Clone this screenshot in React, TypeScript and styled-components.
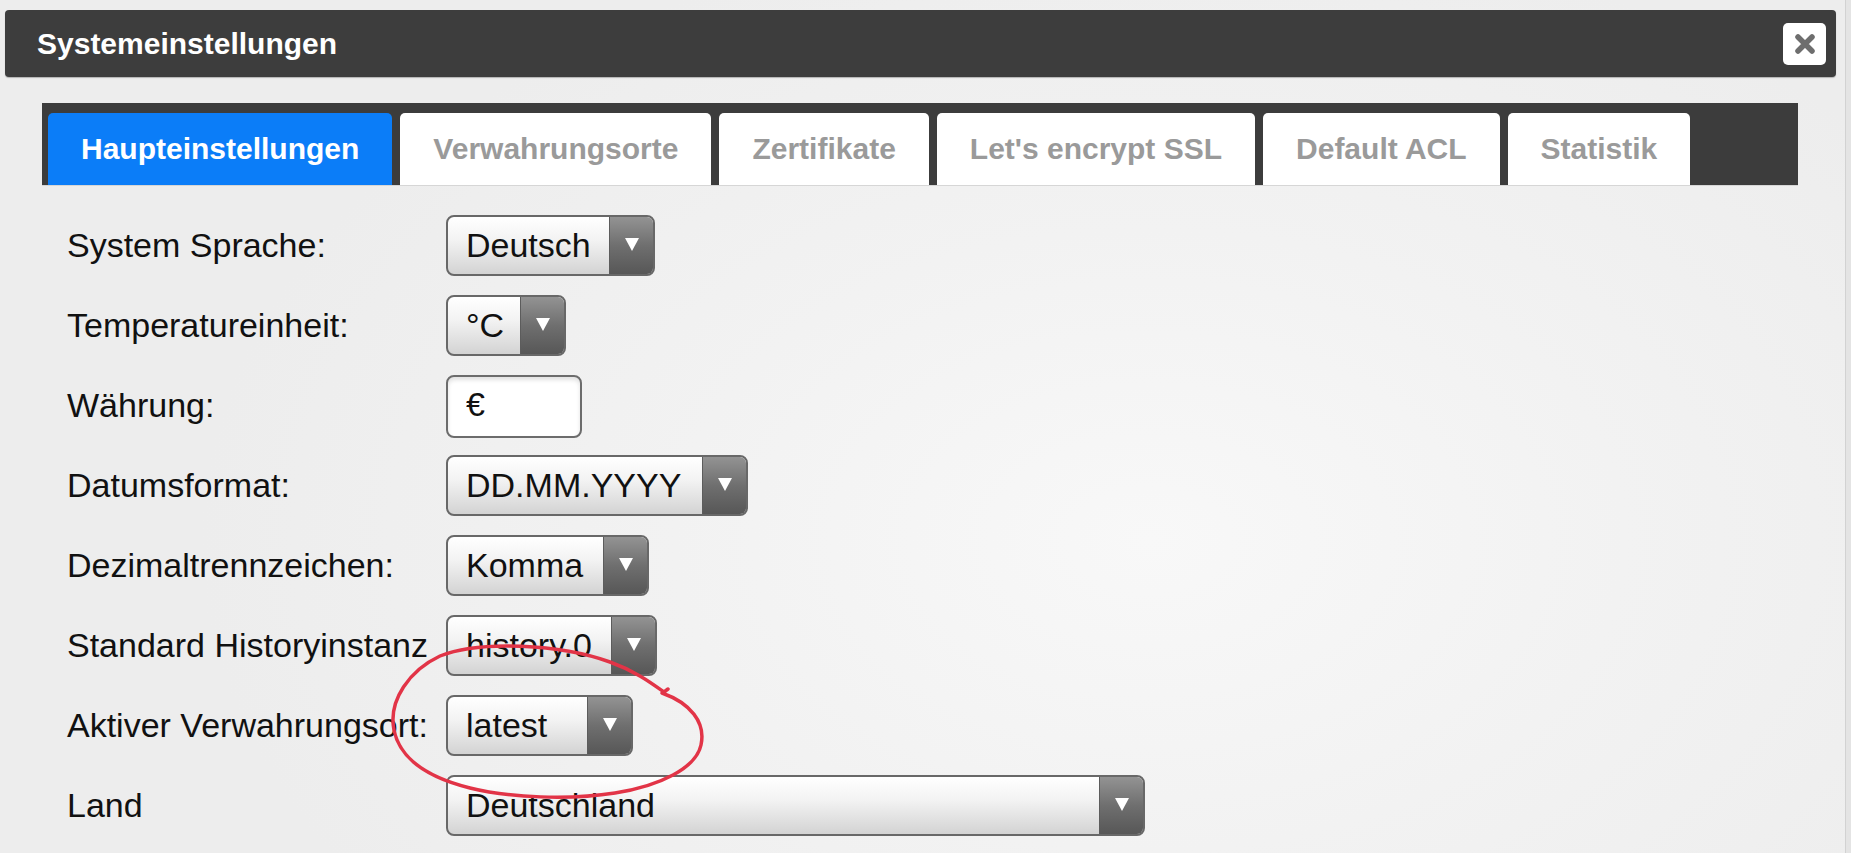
import React from "react";
import styled, { createGlobalStyle } from "styled-components";

const GlobalStyle = createGlobalStyle`
  html, body { margin: 0; padding: 0; }
  body {
    background: #e4e4e4;
    font-family: "Liberation Sans", Arial, Helvetica, sans-serif;
    overflow: hidden;
  }
`;

const Dialog = styled.div`
  position: relative;
  width: 1846px;
  height: 853px;
  box-sizing: border-box;
  padding-top: 10px;
  background: radial-gradient(ellipse 950px 620px at 1150px 540px, #f8f8f8 0%, #f2f2f2 50%, #ededed 100%);
  border-right: 1px solid #d2d2d2;
`;

const TitleBar = styled.div`
  height: 67px;
  margin: 0 9px 0 5px;
  box-sizing: border-box;
  padding: 0 10px 0 32px;
  background: #3d3d3d;
  border-radius: 4px;
  display: flex;
  align-items: center;
  justify-content: space-between;
  box-shadow: 0 1px 1px rgba(0, 0, 0, 0.25);
`;

const Title = styled.h1`
  margin: 0;
  color: #ffffff;
  font-size: 30px;
  font-weight: bold;
  letter-spacing: 0;
`;

const CloseButton = styled.button`
  width: 43px;
  height: 42px;
  padding: 0;
  border: none;
  border-radius: 5px;
  background: #ffffff;
  display: grid;
  place-items: center;
`;

const Content = styled.div`
  padding: 26px 47px 0 42px;
`;

const TabBar = styled.div`
  height: 82px;
  box-sizing: border-box;
  padding: 10px 6px 0;
  background: #3c3c3c;
  display: flex;
  align-items: flex-end;
  gap: 8px;
  box-shadow: 0 1px 0 #d6d6d6;
`;

const Tab = styled.div<{ $active?: boolean }>`
  height: 72px;
  padding: 0 33px;
  display: flex;
  align-items: center;
  border-radius: 5px 5px 0 0;
  background: ${(p) => (p.$active ? "#0b7df8" : "#ffffff")};
  color: ${(p) => (p.$active ? "#ffffff" : "#9a9a9a")};
  font-size: 30px;
  font-weight: bold;
  white-space: nowrap;
`;

const Form = styled.div`
  margin-top: 30px;
  padding-left: 25px;
  display: grid;
  grid-template-columns: 379px 1fr;
  grid-auto-rows: 61px;
  row-gap: 19px;
  align-items: center;
`;

const Label = styled.label`
  font-size: 34px;
  color: #111111;
  white-space: nowrap;
`;

const Select = styled.div<{ $w: number }>`
  width: ${(p) => p.$w}px;
  height: 61px;
  box-sizing: border-box;
  border: 2px solid #686868;
  border-radius: 8px;
  overflow: hidden;
  display: flex;
  background: linear-gradient(to bottom, #ffffff 0%, #f3f3f3 40%, #d3d3d3 100%);
`;

const SelectValue = styled.div`
  flex: 1;
  padding-left: 18px;
  display: flex;
  align-items: center;
  font-size: 34px;
  color: #111111;
  white-space: nowrap;
`;

const SelectArrow = styled.div`
  width: 43px;
  flex: none;
  border-left: 1px solid #5c5c5c;
  background: linear-gradient(to bottom, #939393 0%, #6f6f6f 50%, #575757 100%);
  display: flex;
  align-items: center;
  justify-content: center;
  &::after {
    content: "";
    margin-top: -3px;
    border-left: 7.5px solid transparent;
    border-right: 7.5px solid transparent;
    border-top: 13px solid #ffffff;
  }
`;

const TextInput = styled.input`
  width: 136px;
  height: 63px;
  align-self: start;
  box-sizing: border-box;
  border: 2px solid #6c6c6c;
  border-radius: 8px;
  background: #ffffff;
  box-shadow: inset 0 3px 4px rgba(0, 0, 0, 0.12);
  padding: 0 0 4px 18px;
  font-family: inherit;
  font-size: 34px;
  color: #111111;
  outline: none;
`;

const Annotation = styled.svg`
  position: absolute;
  left: 0;
  top: 0;
  pointer-events: none;
`;

type Field =
  | { label: string; kind: "select"; value: string; width: number }
  | { label: string; kind: "input"; value: string };

const fields: Field[] = [
  { label: "System Sprache:", kind: "select", value: "Deutsch", width: 209 },
  { label: "Temperatureinheit:", kind: "select", value: "°C", width: 120 },
  { label: "Währung:", kind: "input", value: "€" },
  { label: "Datumsformat:", kind: "select", value: "DD.MM.YYYY", width: 302 },
  { label: "Dezimaltrennzeichen:", kind: "select", value: "Komma", width: 203 },
  { label: "Standard Historyinstanz", kind: "select", value: "history.0", width: 211 },
  { label: "Aktiver Verwahrungsort:", kind: "select", value: "latest", width: 187 },
  { label: "Land", kind: "select", value: "Deutschland", width: 699 },
];

const tabs = [
  "Haupteinstellungen",
  "Verwahrungsorte",
  "Zertifikate",
  "Let's encrypt SSL",
  "Default ACL",
  "Statistik",
];

export default function App() {
  return (
    <>
      <GlobalStyle />
      <Dialog>
        <TitleBar>
          <Title>Systemeinstellungen</Title>
          <CloseButton aria-label="close">
            <svg width="22" height="22" viewBox="0 0 22 22">
              <path
                d="M4 4 L18 18 M18 4 L4 18"
                stroke="#6e6e6e"
                strokeWidth="5.5"
                strokeLinecap="round"
              />
            </svg>
          </CloseButton>
        </TitleBar>
        <Content>
          <TabBar>
            {tabs.map((t, i) => (
              <Tab key={t} $active={i === 0}>
                {t}
              </Tab>
            ))}
          </TabBar>
          <Form>
            {fields.map((f) => (
              <React.Fragment key={f.label}>
                <Label>{f.label}</Label>
                {f.kind === "select" ? (
                  <Select $w={f.width}>
                    <SelectValue>{f.value}</SelectValue>
                    <SelectArrow />
                  </Select>
                ) : (
                  <TextInput readOnly value={f.value} />
                )}
              </React.Fragment>
            ))}
          </Form>
        </Content>
        <Annotation width="1851" height="853" viewBox="0 0 1851 853">
          <path
            d="M 662 693 C 690 703, 706 722, 701 745 C 696 768, 660 786, 615 793 C 570 800, 510 798, 470 788 C 430 778, 400 760, 394 730 C 388 700, 410 670, 440 656 C 480 640, 560 644, 610 662 C 635 671, 650 682, 664 692 L 668 689"
            fill="none"
            stroke="#e23447"
            strokeWidth="3.5"
            strokeLinecap="round"
            strokeLinejoin="round"
          />
        </Annotation>
      </Dialog>
    </>
  );
}
